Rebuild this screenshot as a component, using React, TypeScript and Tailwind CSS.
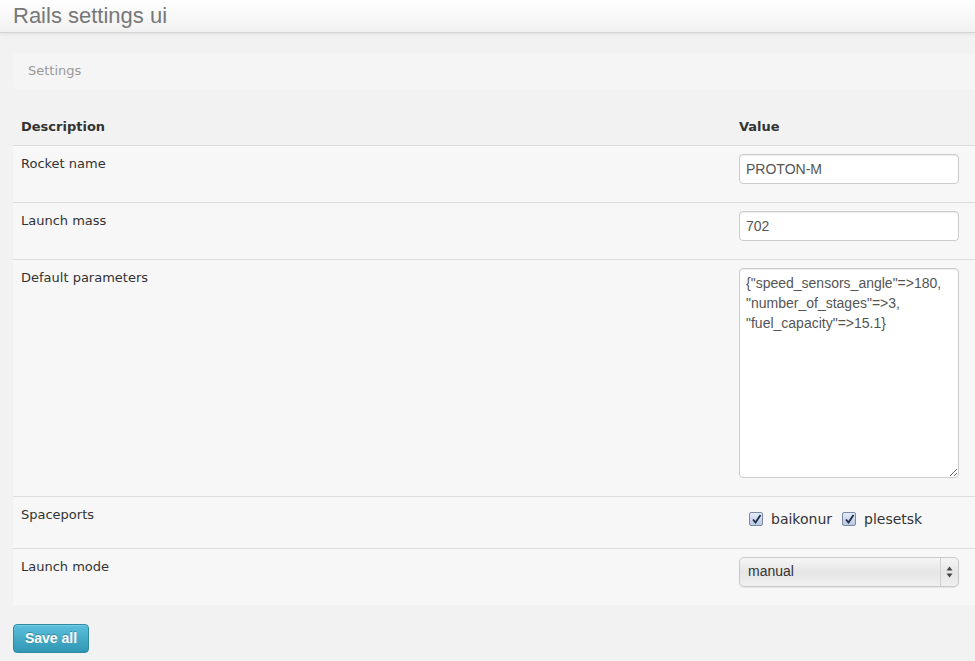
import { useState } from 'react';

const rows = [
  { label: 'Rocket name', kind: 'text', value: 'PROTON-M' },
  { label: 'Launch mass', kind: 'text', value: '702' },
  {
    label: 'Default parameters',
    kind: 'area',
    value: '{"speed_sensors_angle"=>180,\n"number_of_stages"=>3,\n"fuel_capacity"=>15.1}',
  },
  { label: 'Spaceports', kind: 'check', value: '' },
  { label: 'Launch mode', kind: 'select', value: 'manual' },
];

function Check({ label }: { label: string }) {
  const [on, setOn] = useState(true);
  return (
    <label className="flex items-center gap-[8px] cursor-pointer" onClick={() => setOn(!on)}>
      <span className="w-[14px] h-[14px] rounded-[2px] border border-[#7d8aa6] bg-gradient-to-b from-[#e4ecf8] to-[#b9c9e2] flex items-center justify-center">
        {on && (
          <svg width="11" height="11" viewBox="0 0 11 11">
            <path d="M2 5.5 L4.5 8.5 L9.5 1" fill="none" stroke="#1f2a44" strokeWidth="1.8" />
          </svg>
        )}
      </span>
      <span className="text-[14px] text-[#333]">{label}</span>
    </label>
  );
}

export default function App() {
  return (
    <div className="w-[975px] min-h-[661px] overflow-hidden bg-[#f2f2f2] font-['DejaVu_Sans',Verdana,sans-serif] text-[13px] text-[#333]">
      <div className="h-[33px] bg-gradient-to-b from-white to-[#f1f1f1] border-b border-[#d4d4d4] shadow-[0_1px_4px_rgba(0,0,0,0.08)] flex items-center px-[13px]">
        <h1 className="font-['Liberation_Sans',Arial,sans-serif] text-[22px] text-[#777] leading-none">
          Rails settings ui
        </h1>
      </div>

      <div className="w-[1000px] pl-[13px] pt-[20px]">
        <div className="h-[36px] bg-[#f5f5f5] rounded-[4px] flex items-center pl-[15px] text-[#999] text-[13px]">
          Settings
        </div>

        <table className="mt-[20px] w-full border-collapse">
          <thead>
            <tr className="h-[36px] border-b border-[#dddddd]">
              <th className="text-left font-bold px-[8px] w-[718px]">Description</th>
              <th className="text-left font-bold px-[8px]">Value</th>
            </tr>
          </thead>
          <tbody>
            {rows.map((r) => (
              <tr key={r.label} className="bg-[#f7f7f7] border-b border-[#dddddd] last:border-b-0 align-top">
                <td className="px-[8px] pt-[8px] leading-[20px]">{r.label}</td>
                <td className="px-[8px] pt-[8px] pb-[18px] font-['Liberation_Sans',Arial,sans-serif] text-[14px] text-[#555]">
                  {r.kind === 'text' && (
                    <input
                      defaultValue={r.value}
                      className="block w-[220px] h-[30px] px-[6px] border border-[#ccc] rounded-[4px] bg-white text-[14px] text-[#555] shadow-[inset_0_1px_1px_rgba(0,0,0,0.075)] outline-none"
                    />
                  )}
                  {r.kind === 'area' && (
                    <textarea
                      defaultValue={r.value}
                      className="block w-[220px] h-[210px] px-[6px] py-[4px] border border-[#ccc] rounded-[4px] bg-white text-[14px] leading-[20px] text-[#555] shadow-[inset_0_1px_1px_rgba(0,0,0,0.075)] outline-none resize-y"
                    />
                  )}
                  {r.kind === 'check' && (
                    <div className="flex items-center gap-[10px] pl-[10px] h-[21px] mt-[4px] font-['DejaVu_Sans',Verdana,sans-serif]">
                      <Check label="baikonur" />
                      <Check label="plesetsk" />
                    </div>
                  )}
                  {r.kind === 'select' && (
                    <div className="w-[220px] h-[30px] border border-[#c8c8c8] rounded-[5px] bg-gradient-to-b from-[#f6f6f6] via-[#e6e6e6] to-[#f0f0f0] flex items-center shadow-[0_1px_1px_rgba(0,0,0,0.08)]">
                      <span className="flex-1 pl-[8px] text-[#333]">manual</span>
                      <span className="w-[18px] h-full border-l border-[#cfcfcf] flex items-center justify-center">
                        <svg width="7" height="12" viewBox="0 0 7 12">
                          <path d="M3.5 0.5 L6.5 4.5 L0.5 4.5 Z" fill="#444" />
                          <path d="M3.5 11.5 L6.5 7.5 L0.5 7.5 Z" fill="#444" />
                        </svg>
                      </span>
                    </div>
                  )}
                </td>
              </tr>
            ))}
          </tbody>
        </table>

        <button className="mt-[19px] h-[29px] w-[76px] rounded-[4px] border border-[#2f8aa8] bg-gradient-to-b from-[#5bc0de] to-[#2f96b4] text-white font-bold text-[14px] font-['Liberation_Sans',Arial,sans-serif] [text-shadow:0_-1px_0_rgba(0,0,0,0.25)] shadow-[inset_0_1px_0_rgba(255,255,255,0.2)]">
          Save all
        </button>
      </div>
    </div>
  );
}
